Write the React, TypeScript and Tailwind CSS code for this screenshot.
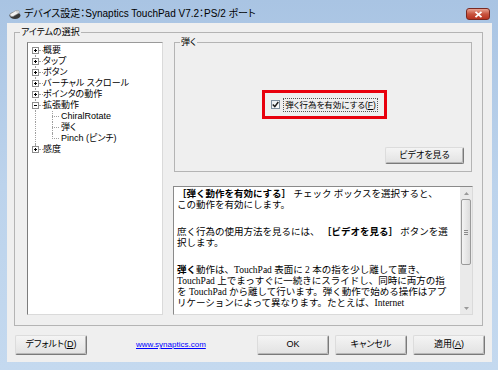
import React from 'react'

const UI = "font-['Liberation_Sans','Noto_Sans_CJK_JP',sans-serif] [font-feature-settings:'palt']"

type Item = { label: string; kind: 'root' | 'open' | 'child'; pos?: 'first' | 'mid' | 'last' }

const TREE: Item[] = [
  { label: '概要', kind: 'root', pos: 'first' },
  { label: 'タップ', kind: 'root' },
  { label: 'ボタン', kind: 'root' },
  { label: 'バーチャル スクロール', kind: 'root' },
  { label: 'ポインタの動作', kind: 'root' },
  { label: '拡張動作', kind: 'open' },
  { label: 'ChiralRotate', kind: 'child', pos: 'first' },
  { label: '弾く', kind: 'child', pos: 'mid' },
  { label: 'Pinch (ピンチ)', kind: 'child', pos: 'last' },
  { label: '感度', kind: 'root', pos: 'last' },
]

function Expander({ open }: { open: boolean }) {
  return (
    <svg width="7" height="7" viewBox="0 0 7 7" className="relative block">
      <rect x="0.5" y="0.5" width="6" height="6" fill="#fff" stroke="#8e8e8e" />
      <line x1="2" y1="3.5" x2="5" y2="3.5" stroke="#000" />
      {!open && <line x1="3.5" y1="2" x2="3.5" y2="5" stroke="#000" />}
    </svg>
  )
}

function TreeRow({ item }: { item: Item }) {
  const rootLine =
    item.pos === 'first' && item.kind !== 'child'
      ? 'top-1/2 bottom-0'
      : item.pos === 'last' && item.kind !== 'child'
        ? 'top-0 bottom-1/2'
        : 'top-0 bottom-0'

  return (
    <div className="flex h-[11px] items-center pl-[4px]">
      <div className="relative flex w-[7px] items-center self-stretch">
        <div className={`absolute left-[3px] border-l border-dotted border-[#a0a0a0] ${rootLine}`} />
        {item.kind !== 'child' && <Expander open={item.kind === 'open'} />}
      </div>
      {item.kind === 'child' ? (
        <>
          <div className="w-[13px]" />
          <div className="relative flex w-[7px] items-center self-stretch">
            <div
              className={`absolute left-0 top-0 border-l border-dotted border-[#a0a0a0] ${
                item.pos === 'last' ? 'bottom-1/2' : 'bottom-0'
              }`}
            />
            <div className="w-full border-t border-dotted border-[#a0a0a0]" />
          </div>
          <span className="ml-[2px] text-[9px] leading-[11px] text-black">{item.label}</span>
        </>
      ) : (
        <>
          <div className="w-[4px] border-t border-dotted border-[#a0a0a0]" />
          <span className="text-[9px] leading-[11px] text-black">{item.label}</span>
        </>
      )}
    </div>
  )
}

function Btn({ children, className = '' }: { children: React.ReactNode; className?: string }) {
  return (
    <div
      className={`flex h-[20px] items-center justify-center rounded-[2px] border border-b-[#7a7a7a] border-l-[#dcdcdc] border-r-[#7a7a7a] border-t-[#dcdcdc] bg-gradient-to-b from-[#f4f4f4] to-[#e2e2e2] text-[9px] text-black shadow-[inset_-1px_-1px_0_#b8b8b8] ${className}`}
    >
      {children}
    </div>
  )
}

export default function App() {
  return (
    <div className={`flex h-[370px] w-[498px] flex-col bg-gradient-to-b from-[#a9c4e3] via-[#bcd3ec] to-[#c4d9ef] ${UI}`}>
      {/* タイトルバー */}
      <div className="flex h-[23px] items-center pl-[8px] pr-[8px] pt-[5px]">
        <svg width="13" height="12" viewBox="0 0 13 12">
          <ellipse cx="7" cy="7.5" rx="5.5" ry="3.5" fill="#3a3a3a" />
          <path d="M2 6 L8 2.5 Q12 2 11 5 L5 8.5 Q1.5 9 2 6 Z" fill="#f2f2f2" stroke="#8a8a8a" strokeWidth="0.6" />
          <ellipse cx="9.3" cy="3.8" rx="1.4" ry="1" fill="#d0d0d0" />
        </svg>
        <div className="ml-[3px] whitespace-nowrap text-[10px] leading-[14px] text-black">
          デバイス設定：Synaptics TouchPad V7.2：PS/2 ポート
        </div>
        <div className="flex-1" />
        <div className="flex h-[12px] w-[24px] items-center justify-center rounded-[3px] border border-[#7a2a22] bg-gradient-to-b from-[#e8a393] via-[#c8543f] to-[#b8321f]">
          <svg width="9" height="7" viewBox="0 0 9 7">
            <path d="M1.5 0.8 L7.5 6.2 M7.5 0.8 L1.5 6.2" stroke="#fff" strokeWidth="1.8" />
          </svg>
        </div>
      </div>

      {/* クライアント領域 */}
      <div className="mb-[8px] ml-[7px] mr-[6px] flex flex-1 flex-col bg-[#efefef] pb-[5px] pl-[7px] pr-[9px] pt-[9px]">
        <div className="border border-[#b4b4b4]">
          <div className="-mt-[7px] ml-[5px] w-fit bg-[#efefef] px-[1px] text-[9px] leading-[12px] text-black">
            アイテムの選択
          </div>
          <div className="mb-[10px] ml-[12px] mr-[9px] mt-[4px] flex h-[273px] gap-[10px]">
            {/* ツリー */}
            <div className="w-[136px] border border-b-[#dadada] border-l-[#7c7c7c] border-r-[#dadada] border-t-[#9a9a9a] bg-white pt-[2px]">
              {TREE.map((item) => (
                <TreeRow key={item.label} item={item} />
              ))}
            </div>

            {/* 右側 */}
            <div className="flex flex-1 flex-col gap-[14px]">
              <div className="mx-[1px] flex h-[130px] flex-col border border-[#b4b4b4]">
                <div className="-mt-[7px] ml-[5px] w-fit bg-[#efefef] px-[1px] text-[9px] leading-[12px] text-black">
                  弾く
                </div>
                <div className="ml-[3px] mt-[42px] flex h-[29px] items-center self-center border-[3px] border-[#e8000d] pl-[6px] pr-[6px]">
                  <div className="flex h-[9px] w-[9px] items-center justify-center border border-[#7f8f9f] bg-gradient-to-br from-[#e8ecf0] to-white">
                    <svg width="7" height="7" viewBox="0 0 7 7">
                      <path d="M0.8 3.5 L2.8 5.6 L6.3 1" fill="none" stroke="#1c1c1c" strokeWidth="1.5" />
                    </svg>
                  </div>
                  <div className="ml-[3px] border border-dotted border-[#555] px-[1px] text-[8.5px] leading-[12px] text-black">
                    弾く行為を有効にする(<span className="underline">F</span>)
                  </div>
                </div>
                <Btn className="mr-[7px] mt-[28px] !h-[17px] w-[79px] self-end">ビデオを見る</Btn>
              </div>

              {/* 説明テキスト */}
              <div className="flex flex-1 border border-b-[#dadada] border-l-[#8a8a8a] border-r-[#dadada] border-t-[#8a8a8a] bg-white">
                <div className="flex-1 overflow-hidden whitespace-nowrap pl-[3px] pt-[2px] font-['Liberation_Serif','Noto_Sans_CJK_JP',serif] text-[9.5px] leading-[11px] text-black [font-feature-settings:normal]">
                  <div>
                    <b>［弾く動作を有効にする］</b> チェック ボックスを選択すると、
                  </div>
                  <div>この動作を有効にします。</div>
                  <div className="mt-[16px]">
                    庶く行為の使用方法を見るには、 <b>［ビデオを見る］</b> ボタンを選
                  </div>
                  <div>択します。</div>
                  <div className="mt-[16px]">
                    <b>弾く</b>動作は、TouchPad 表面に 2 本の指を少し離して置き、
                  </div>
                  <div>TouchPad 上でまっすぐに一続きにスライドし、同時に両方の指</div>
                  <div>を TouchPad から離して行います。弾く動作で始める操作はアプ</div>
                  <div>リケーションによって異なります。たとえば、Internet</div>
                </div>
                {/* スクロールバー */}
                <div className="flex w-[12px] flex-col bg-[#eaeaea]">
                  <div className="flex h-[12px] items-center justify-center">
                    <svg width="5" height="3" viewBox="0 0 5 3">
                      <path d="M0 3 L2.5 0 L5 3 Z" fill="#9a9a9a" />
                    </svg>
                  </div>
                  <div className="mx-[1px] flex h-[66px] items-center justify-center rounded-[2px] border border-[#9a9a9a] bg-gradient-to-r from-[#f4f4f4] to-[#dcdcdc]">
                    <div className="flex flex-col gap-[1px]">
                      <div className="h-px w-[4px] bg-[#8a8a8a]" />
                      <div className="h-px w-[4px] bg-[#8a8a8a]" />
                      <div className="h-px w-[4px] bg-[#8a8a8a]" />
                    </div>
                  </div>
                  <div className="flex-1" />
                  <div className="flex h-[12px] items-center justify-center">
                    <svg width="5" height="3" viewBox="0 0 5 3">
                      <path d="M0 0 L2.5 3 L5 0 Z" fill="#9a9a9a" />
                    </svg>
                  </div>
                </div>
              </div>
            </div>
          </div>
        </div>

        {/* 下部ボタン */}
        <div className="mt-[9px] flex items-center pl-[1px]">
          <Btn className="w-[72px]">
            デフォルト(<span className="underline">D</span>)
          </Btn>
          <a className="ml-[49px] text-[8px] leading-[10px] text-[#0000ff] underline">www.synaptics.com</a>
          <div className="flex-1" />
          <div className="-mr-[2px] flex gap-[6px]">
            <Btn className="w-[72px]">OK</Btn>
            <Btn className="w-[72px]">キャンセル</Btn>
            <Btn className="w-[72px]">
              適用(<span className="underline">A</span>)
            </Btn>
          </div>
        </div>
      </div>
    </div>
  )
}
